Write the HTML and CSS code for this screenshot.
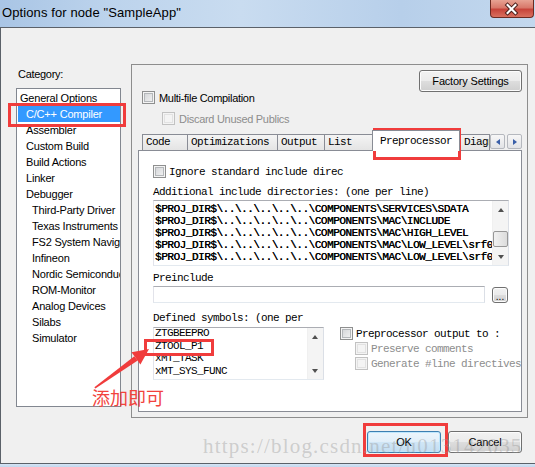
FILE: index.html
```html
<!DOCTYPE html>
<html>
<head>
<meta charset="utf-8">
<link rel="stylesheet" href="styles.css">
</head>
<body>
<div class="window">
  <div class="titlebar">
    <span class="title">Options for node "SampleApp"</span>
    <span class="close">
      <svg width="44" height="18" viewBox="0 0 44 18">
        <path d="M18 5 L26 13 M26 5 L18 13" stroke="#4a1f1a" stroke-width="4.2" stroke-linecap="square"/>
        <path d="M18 5 L26 13 M26 5 L18 13" stroke="#ffffff" stroke-width="2.2" stroke-linecap="square"/>
      </svg>
    </span>
  </div>
  <div class="client">
    <div class="main">
      <div class="cat">
        <div class="cat-label">Category:</div>
        <ul class="catlist">
          <li class="l0">General Options</li>
          <li class="l1 sel">C/C++ Compiler</li>
          <li class="l1">Assembler</li>
          <li class="l1">Custom Build</li>
          <li class="l1">Build Actions</li>
          <li class="l1">Linker</li>
          <li class="l1">Debugger</li>
          <li class="l2">Third-Party Driver</li>
          <li class="l2">Texas Instruments</li>
          <li class="l2">FS2 System Navigator</li>
          <li class="l2">Infineon</li>
          <li class="l2">Nordic Semiconductor</li>
          <li class="l2">ROM-Monitor</li>
          <li class="l2">Analog Devices</li>
          <li class="l2">Silabs</li>
          <li class="l2">Simulator</li>
        </ul>
      </div>
      <div class="pane">
        <div class="pane-top">
          <div class="checks">
            <div class="chk"><span class="box"></span><span>Multi-file Compilation</span></div>
            <div class="chk sub dis"><span class="box"></span><span>Discard Unused Publics</span></div>
          </div>
          <div class="btn factory">Factory Settings</div>
        </div>
        <div class="tabs">
          <div class="tab t-code">Code</div>
          <div class="tab t-opt">Optimizations</div>
          <div class="tab t-out">Output</div>
          <div class="tab t-list">List</div>
          <div class="tab t-pre sel">Preprocessor</div>
          <div class="tab t-diag">Diagnostics</div>
          <div class="tabscroll">
            <span class="ts"><i class="tri-l"></i></span>
            <span class="ts"><i class="tri-r"></i></span>
          </div>
        </div>
        <div class="page">
          <div class="pchk"><span class="box"></span><span>Ignore standard include direc</span></div>
          <div class="plabel lbl-add">Additional include directories: (one per line)</div>
          <div class="edit ta">
            <div class="ta-text">$PROJ_DIR$\..\..\..\..\..\COMPONENTS\SERVICES\SDATA
$PROJ_DIR$\..\..\..\..\..\COMPONENTS\MAC\INCLUDE
$PROJ_DIR$\..\..\..\..\..\COMPONENTS\MAC\HIGH_LEVEL
$PROJ_DIR$\..\..\..\..\..\COMPONENTS\MAC\LOW_LEVEL\srf04
$PROJ_DIR$\..\..\..\..\..\COMPONENTS\MAC\LOW_LEVEL\srf04</div>
            <div class="vscroll">
              <div class="sb-btn"><i class="tri-u"></i></div>
              <div class="sb-track ta-track"><div class="thumb"></div></div>
              <div class="sb-btn"><i class="tri-d"></i></div>
            </div>
          </div>
          <div class="plabel lbl-pre">Preinclude</div>
          <div class="prerow">
            <div class="edit preinput"></div>
            <div class="btn dots">...</div>
          </div>
          <div class="plabel lbl-def">Defined symbols: (one per</div>
          <div class="symrow">
            <div class="edit symlist">
              <div class="sym-text">
                <div class="sym first">ZTGBEEPRO</div>
                <div class="sym">ZTOOL_P1</div>
                <div class="sym">xMT_TASK</div>
                <div class="sym">xMT_SYS_FUNC</div>
              </div>
              <div class="vscroll">
                <div class="sb-btn"><i class="tri-u"></i></div>
                <div class="sb-track"></div>
                <div class="sb-btn"><i class="tri-d"></i></div>
              </div>
            </div>
            <div class="ppcol">
              <div class="pchk"><span class="box"></span><span>Preprocessor output to :</span></div>
              <div class="pchk sub2 dis"><span class="box"></span><span>Preserve comments</span></div>
              <div class="pchk sub2 dis"><span class="box"></span><span>Generate #line directives</span></div>
            </div>
          </div>
        </div>
      </div>
    </div>
    <div class="footer">
      <div class="btn dlg ok">OK</div>
      <div class="btn dlg">Cancel</div>
    </div>
  </div>
  <div class="frame-bottom"></div>

  <div class="mark rb-cat"></div>
  <div class="mark rb-tab"></div>
  <div class="mark rb-sym"></div>
  <div class="mark rb-ok"></div>
  <svg class="arrow" width="535" height="467" viewBox="0 0 535 467">
    <polygon points="95.4,388.6 94.4,387.2 134.3,356.3 137.7,360.5" fill="#f03c3c"/>
    <polygon points="149,349 140.4,364.5 131.5,352.3" fill="#f03c3c"/>
  </svg>
  <div class="note">添加即可</div>
  <div class="watermark">https://blog.csdn.net/u013142035</div>
</div>
</body>
</html>
```
FILE: styles.css
```css
* { box-sizing: border-box; margin: 0; padding: 0; }
html, body { width: 535px; height: 467px; overflow: hidden; }
body {
  background: #c6daf0;
  font-family: "Liberation Sans", Arial, sans-serif;
  font-size: 11px;
  color: #000;
}
.window {
  position: relative;
  width: 535px;
  height: 467px;
  display: flex;
  flex-direction: column;
}

/* title bar */
.titlebar {
  flex: none;
  height: 27px;
  display: flex;
  justify-content: space-between;
  align-items: flex-start;
  background: linear-gradient(to right, #a9c5e5 0%, #bcd3ec 20%, #c9dcf0 45%, #b7cfea 75%, #c3d8ee 100%);
}
.title {
  font-size: 13px;
  line-height: 26px;
  padding-left: 2px;
  letter-spacing: 0.1px;
  color: #000;
}
.close {
  width: 44px;
  height: 18px;
  margin-right: 1px;
  border: 1px solid #6b2a22;
  border-top: none;
  border-radius: 0 0 4px 4px;
  background: linear-gradient(to bottom, #e7a293 0%, #d8786a 45%, #c7443a 55%, #d9705f 100%);
  display: flex;
}
.close svg { display: block; margin-left: -1px; }

/* client area */
.client {
  flex: none;
  height: 437px;
  border: 1px solid #5b6169;
  border-right: none;
  background: #f0f0f0;
}
.frame-bottom {
  flex: 1;
  background: linear-gradient(to bottom, #d6e5f5, #c2d7ee);
}
.main {
  display: flex;
  padding-top: 36px;
}

/* category */
.cat {
  width: 130px;
  padding-left: 15px;
  flex: none;
}
.cat-label {
  margin-top: 3px;
  padding-left: 2px;
  line-height: 14px;
  letter-spacing: -0.3px;
}
.catlist {
  margin-top: 7px;
  width: 105px;
  height: 319px;
  border: 1px solid #828790;
  background: #fff;
  list-style: none;
  padding-top: 1px;
  overflow: hidden;
}
.catlist li {
  height: 16px;
  line-height: 16px;
  white-space: nowrap;
  overflow: hidden;
  letter-spacing: -0.2px;
  color: #000;
}
.catlist .l0 { padding-left: 3px; }
.catlist .l1 { padding-left: 9px; }
.catlist .l2 { padding-left: 15px; }
.catlist .sel {
  margin-left: 1px;
  padding-left: 8px;
  background: #3399ff;
  color: #fff;
}

/* right pane */
.pane {
  width: 397px;
  height: 354px;
  border: 1px solid #8d8d8d;
  padding: 0 0 5px 6px;
  display: flex;
  flex-direction: column;
  flex: none;
}
.pane-top {
  height: 65px;
  display: flex;
  justify-content: space-between;
  align-items: flex-start;
}
.checks {
  padding: 26px 0 0 4px;
  display: flex;
  flex-direction: column;
  gap: 8px;
}
.chk {
  display: flex;
  align-items: center;
  height: 13px;
  white-space: nowrap;
  letter-spacing: -0.3px;
}
.chk .box { margin-right: 4px; }
.chk.sub { padding-left: 20px; }
.dis { color: #8d8d8d; }

.box {
  display: inline-block;
  flex: none;
  width: 13px;
  height: 13px;
  border: 1px solid #8e8f8f;
  background: linear-gradient(135deg, #cfd1d4, #f6f6f6);
  box-shadow: inset 0 0 0 1px #f4f4f4, inset 0 0 0 2px #b4b7ba;
}
.dis .box {
  border-color: #c2c2c2;
  background: #f4f4f4;
  box-shadow: inset 0 0 0 1px #f4f4f4, inset 0 0 0 2px #e2e2e2;
}

.btn {
  border: 1px solid #707070;
  border-radius: 3px;
  background: linear-gradient(to bottom, #f2f2f2 0%, #ebebeb 48%, #dddddd 52%, #cfcfcf 100%);
  box-shadow: inset 0 0 0 1px #fcfcfc;
  text-align: center;
  letter-spacing: -0.2px;
}
.factory {
  margin-top: 5px;
  margin-right: 5px;
  width: 103px;
  height: 22px;
  line-height: 20px;
}

/* tabs */
.tabs {
  height: 20px;
  width: 385px;
  display: flex;
  align-items: flex-end;
  padding-left: 4px;
  font-family: "Liberation Mono", "DejaVu Sans Mono", monospace;
  font-size: 11px;
  letter-spacing: -0.6px;
}
.tab {
  flex: none;
  height: 16px;
  border: 1px solid #898c95;
  border-bottom: none;
  background: linear-gradient(to bottom, #f4f4f4, #e4e4e4);
  padding-left: 3px;
  line-height: 15px;
  white-space: nowrap;
  overflow: hidden;
}
.tab + .tab { margin-left: -1px; }
.t-code { width: 46px; }
.t-opt { width: 91px; }
.t-out { width: 48px; }
.t-list { width: 49px; }
.t-pre { width: 88px; }
.t-diag { width: 31px; padding-left: 4px; }
.tab.sel {
  height: 21px;
  margin-bottom: -1px;
  background: #fff;
  position: relative;
  z-index: 1;
  padding-left: 7px;
  padding-top: 2px;
  line-height: 16px;
}
.tabscroll {
  flex: none;
  display: flex;
  gap: 2px;
  margin-bottom: 1px;
}
.ts {
  width: 15px;
  height: 15px;
  border: 1px solid #b5b8be;
  border-radius: 2px;
  background: linear-gradient(to bottom, #f7f7f7, #e2e3e6);
  display: flex;
  align-items: center;
  justify-content: center;
}
.tri-l, .tri-r, .tri-u, .tri-d { display: block; width: 0; height: 0; }
.tri-l { border-top: 3.5px solid transparent; border-bottom: 3.5px solid transparent; border-right: 4px solid #3a5fa8; }
.tri-r { border-top: 3.5px solid transparent; border-bottom: 3.5px solid transparent; border-left: 4px solid #3a5fa8; }
.tri-u { border-left: 3.5px solid transparent; border-right: 3.5px solid transparent; border-bottom: 4px solid #505050; }
.tri-d { border-left: 3.5px solid transparent; border-right: 3.5px solid transparent; border-top: 4px solid #505050; }

/* tab page */
.page {
  width: 384px;
  height: 262px;
  border: 1px solid #898c95;
  background: #fff;
  padding: 14px 0 0 14px;
  overflow: hidden;
  font-family: "Liberation Mono", "DejaVu Sans Mono", monospace;
  font-size: 11px;
  letter-spacing: -0.6px;
  color: #000;
}
.pchk {
  display: flex;
  align-items: center;
  height: 13px;
  white-space: nowrap;
}
.pchk .box { margin-right: 3px; }
.pchk.dis { color: #8d8d8d; }
.plabel {
  line-height: 14px;
  white-space: nowrap;
}
.lbl-add { margin-top: 7px; }
.lbl-pre { margin-top: 5px; }
.lbl-def { margin-top: 8px; }

.edit {
  border: 1px solid;
  border-color: #abadb3 #dbdfe6 #e3e9ef #e2e3ea;
  background: #fff;
}
.ta {
  margin-top: 1px;
  width: 356px;
  height: 66px;
  display: flex;
}
.ta-text {
  flex: 1;
  overflow: hidden;
  white-space: pre;
  padding: 2px 0 0 1px;
  line-height: 12px;
  letter-spacing: -0.46px;
  text-shadow: 0.3px 0 0 #000;
}
.vscroll {
  width: 16px;
  flex: none;
  display: flex;
  flex-direction: column;
  background: #f4f4f4;
  border-left: 1px solid #f0f0f0;
}
.sb-btn {
  height: 17px;
  flex: none;
  display: flex;
  align-items: center;
  justify-content: center;
}
.sb-track { flex: 1; }
.ta-track { padding-top: 13px; }
.thumb {
  width: 15px;
  height: 16px;
  border: 1px solid #979797;
  border-radius: 2px;
  background: linear-gradient(to right, #f1f1f1, #dcdcdc);
}

.prerow {
  margin-top: 1px;
  display: flex;
  align-items: flex-start;
}
.preinput {
  width: 332px;
  height: 17px;
}
.dots {
  margin-left: 7px;
  margin-top: 1px;
  width: 16px;
  height: 16px;
  line-height: 17px;
  font-family: "Liberation Sans", Arial, sans-serif;
  font-size: 10px;
  letter-spacing: 0;
}

.symrow {
  margin-top: 2px;
  display: flex;
  align-items: flex-start;
}
.symlist {
  width: 171px;
  height: 53px;
  display: flex;
}
.sym-text {
  flex: 1;
  overflow: hidden;
  padding-left: 1px;
}
.sym {
  height: 12.6px;
  line-height: 12.6px;
  white-space: nowrap;
}
.sym.first { margin-top: -1px; }
.ppcol {
  margin-left: 16px;
  display: flex;
  flex-direction: column;
  gap: 2px;
}
.pchk.sub2 { padding-left: 15px; }

/* footer */
.footer {
  margin-top: 13px;
  display: flex;
  justify-content: flex-end;
  gap: 7px;
  padding-right: 13px;
}
.dlg {
  width: 74px;
  height: 22px;
  line-height: 20px;
}
.ok {
  border-color: #3c7fb1;
  background: linear-gradient(to bottom, #ecf5fc 0%, #e1eff9 48%, #d0e6f6 52%, #c3ddf1 100%);
  box-shadow: inset 0 0 0 1px #bfe7fd;
}

/* annotations */
.mark {
  position: absolute;
  border: 3px solid #f03c3c;
  pointer-events: none;
}
.rb-cat { left: 8px; top: 103px; width: 118px; height: 24px; }
.rb-tab { left: 373px; top: 128px; width: 88px; height: 32px; }
.rb-sym { left: 144px; top: 339px; width: 70px; height: 17px; }
.rb-ok { left: 363px; top: 423px; width: 85px; height: 34px; }
.arrow {
  position: absolute;
  left: 0;
  top: 0;
  pointer-events: none;
}
.note {
  position: absolute;
  left: 92px;
  top: 385px;
  font-family: "Noto Sans CJK SC", "Noto Sans", sans-serif;
  font-size: 18px;
  line-height: 24px;
  color: #f2433d;
}
.watermark {
  position: absolute;
  left: 203px;
  top: 433px;
  font-family: "Liberation Serif", serif;
  font-size: 21px;
  line-height: 26px;
  letter-spacing: 1.2px;
  color: rgba(150, 150, 150, 0.4);
  white-space: nowrap;
  pointer-events: none;
}
```
